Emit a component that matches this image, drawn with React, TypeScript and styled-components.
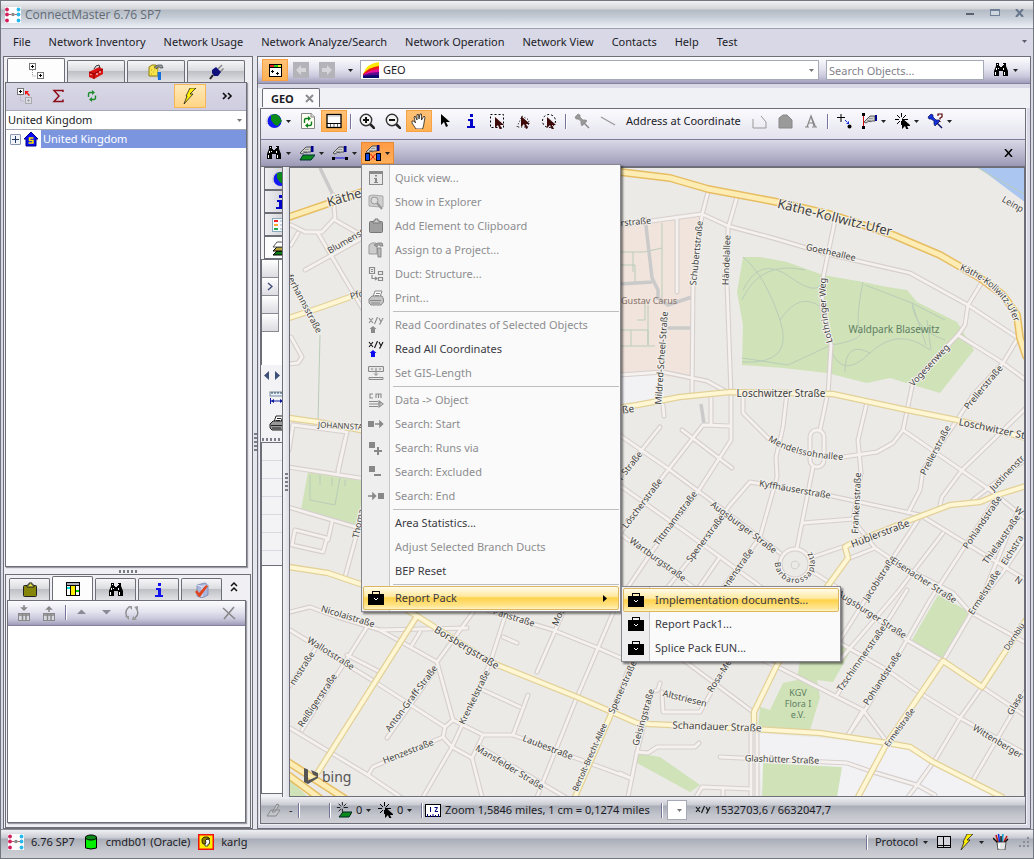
import React from "react";
import styled, { createGlobalStyle, css } from "styled-components";

const GlobalStyle = createGlobalStyle`
  * { box-sizing: border-box; }
  body {
    margin: 0;
    background: #d8d8e6;
    color: #1c1c26;
    font: 11px/16px "Noto Sans", "Open Sans", sans-serif;
  }
  button, input, select { font: inherit; color: inherit; margin: 0; }
  button { padding: 0; border: 0; background: none; white-space: nowrap; }
  svg { display: block; flex: none; }
`;

const line = "#6e6e78";
const barGradient = "linear-gradient(#fcfcfe 0%, #e4e3ef 45%, #c9c7db 75%, #9f9cba 100%)";
const chromeGradient = "linear-gradient(#eff0f3 0, #c9cbd2 8px, #a9adb7 9px, #c4c6cd 70%, #cfd0d6 100%)";

/* ---------- icons ---------- */

const Tree = ({ c = "#000" }: { c?: string }) => (
  <>
    <path d="M4.500 7v6h4" fill="none" stroke="#999" strokeDasharray="1 1" />
    <rect x="1.500" y="0.500" width="6" height="6" fill="#fff" stroke="#777" />
    <path d="M3 3.500h3M4.500 2v3" stroke={c} />
    <rect x="9.500" y="9.500" width="6" height="6" fill="#fff" stroke="#777" />
    <path d="M11 12.500h3M12.500 11v3" stroke={c} />
  </>
);

const Bino = () => (
  <>
    <path d="M3 1h3v3h1v1h2V4h1V1h3v3l2 5v5h-5V9H6v5H1V9l2-5z" fill="#000" />
    <path d="M4.500 2v1M10.500 2v1M3.500 6v2M5.500 6v1M10.500 6v2M2.500 10v3M11.500 10v3" stroke="#fff" />
  </>
);

const Hand = ({ x = 0, y = 0 }: { x?: number; y?: number }) => (
  <g transform={`translate(${x} ${y})`}>
    <path d="M0 8l4-4 2-2h5v5l-3 0-2 1-1-1-3 2z" fill="#cfcfcf" stroke="#333" strokeWidth="0.800" />
    <path d="M3 6.500h4M5 4.500h4" stroke="#777" strokeWidth="0.600" />
    <rect x="11" y="1" width="2.500" height="6" fill="#00008c" />
  </g>
);

const Cursor = ({ x = 0, y = 0, c = "#000" }: { x?: number; y?: number; c?: string }) => (
  <path transform={`translate(${x} ${y})`} d="M0 0v11l3-3 2 5 2-1-2-4h4z" fill={c} />
);

const Case = () => (
  <g shapeRendering="crispEdges">
    <path d="M4 5V1h8v4h-1V2H5v3z" fill="#000" />
    <rect x="0" y="4" width="16" height="11" fill="#000" />
    <path d="M6 8h1v1h2V8h1v1H9v1H7V9H6z" fill="#fff" />
  </g>
);

const Brand = () => (
  <>
    <rect width="16" height="16" fill="#fff" />
    {[2, 7, 13].map((y) => (
      <g key={y}>
        <circle cx="2" cy={y + 0.5} r="1.900" fill="#d21f5b" />
        <circle cx="13.500" cy={y + 0.5} r="1.900" fill="#27b9ee" />
      </g>
    ))}
    <circle cx="8" cy="7.500" r="1.800" fill="#888" />
    <path d="M4 7.500h2M10 7.500h2" stroke="#a66" />
  </>
);

const Refresh = ({ c = "#0b7f1e", d = "#0b7f1e" }: { c?: string; d?: string }) => (
  <>
    <path d="M4.500 9V6.500Q4.500 4.500 6 4.500h3" fill="none" stroke={c} strokeWidth="1.400" />
    <path d="M8 2v5l3-2.500z" fill={c} />
    <path d="M11.500 7.500v2Q11.500 11.500 10 11.500H7" fill="none" stroke={d} strokeWidth="1.400" />
    <path d="M8 9v5l-3-2.500z" fill={d} />
  </>
);

const Bolt = () => <path d="M8 0h6L8 6h3L2 16l3-8H4z" fill="#ffee00" stroke="#222" strokeWidth="0.800" />;
const InfoI = ({ c = "#0000c8" }: { c?: string }) => (
  <path d="M7 1h3v3H7zM5 6h5v7h2v2H4v-2h3V8H5z" fill={c} />
);
const Globe = () => (
  <>
    <circle cx="8.500" cy="8" r="7" fill="#1218f0" />
    <path d="M5 2l5-1 3 2 3 5-3 3-1 2-3-1-2-2-2-3z" fill="#0a8a18" />
    <path d="M1 11Q0 3 6 1" fill="none" stroke="#aaa" strokeDasharray="1 1" />
  </>
);
const Lens = ({ minus }: { minus?: boolean }) => (
  <>
    <path d="M11 11l5 5" stroke="#222" strokeWidth="2.500" />
    <circle cx="7" cy="7" r="5.700" fill="#f4f4f4" stroke="#333" strokeWidth="1.400" />
    <path d={minus ? "M4 7h6" : "M4 7h6M7 4v6"} stroke="#111" strokeWidth="2" />
  </>
);
const Pin = ({ c, e }: { c: string; e: string }) => (
  <>
    <path d="M1 4l3-3 2 1 0 2 3 3h3l1 1-5 5-1-2V8L4 6 2 6z" fill={c} stroke={e} strokeWidth="0.700" />
    <path d="M10 10l5 5" stroke={e} strokeWidth="1.400" />
  </>
);
const Star = () => (
  <path d="M7.500 0v4M7.500 8v4M1 6.500h4M9 6.500h5M3 2l3 3M12 2L9 5M3 11l3-3" stroke="#000" fill="none" />
);
const XY = ({ c = "#111", a }: { c?: string; a?: string }) => (
  <>
    <path d="M1 1l4 5M5 1L1 6M9.500 0L6.500 7M11 1l2 4M15 1l-3 6h-1" fill="none" stroke={c} strokeWidth="1.100" />
    {a && <path d="M5 8l3.500 3H7v4H3v-4H1.500z" transform="translate(0 1)" fill={a} />}
  </>
);
const Printer = ({ c = "#8a8a8a", f = "#ddd" }: { c?: string; f?: string }) => (
  <>
    <path d="M5 7l2-6h7l-2 6z" fill="#fff" stroke={c} />
    <path d="M1 9l3-3h10l1.500 3v3L13 15H3l-2-2z" fill={f} stroke={c} />
    <path d="M2 10.500h11M3 13h9M8 3.500h4M7 5.500h4" stroke={c} />
  </>
);
const TableArrow = ({ up }: { up?: boolean }) => (
  <>
    <rect x="2.500" y="8.500" width="11" height="7" fill="#d8d8e2" stroke="#888" />
    <path d="M2 10h12M6.500 9v6M10 9v6" stroke="#888" strokeWidth="1.500" />
    <path d={up ? "M8 7V2M6 4l2-2 2 2z" : "M8 0v5M6 3l2 2 2-2z"} stroke="#888" fill="#888" strokeWidth="1.500" />
  </>
);

const icons: Record<string, React.ReactNode> = {
  brand: <Brand />,
  tree: <Tree />,
  treeNew: (
    <>
      <path d="M4.500 7v6h4" fill="none" stroke="#aaa" strokeDasharray="1 1" />
      <rect x="1.500" y="0.500" width="6" height="6" fill="#fff" stroke="#777" />
      <path d="M3 3.500h3M4.500 2v3" stroke="#000" />
      <rect x="9.500" y="9.500" width="6" height="6" fill="#dcdce8" stroke="#aaa" />
      <path d="M11 12.500h3M12.500 11v3" stroke="#aaa" />
      <path d="M13.500 7.500l-3-3" stroke="#f01010" strokeWidth="1.500" /><path d="M9 3h4l-4 4z" fill="#f01010" />
    </>
  ),
  toolbox: (
    <>
      <path d="M1 8l10-5 4 2v5l-9 5-5-2z" fill="#d81414" />
      <path d="M1 8l5 2 9-5M6 10v5" stroke="#8a0000" fill="none" />
      <path d="M6 5l2-3 3-1 1 3" fill="none" stroke="#333" />
      <path d="M3 10v1M9 9v2M12 7v2" stroke="#fff" />
    </>
  ),
  project: (
    <>
      <path d="M1 3l3-2h4l2 2v9H1z" fill="#f6e34e" stroke="#8f7e10" />
      <path d="M3 6h1M5 8h1M3 10h1M6 5h1" stroke="#c9a400" />
      <path d="M6 3l4-2h4l1 3h-3v-1H9v2z" fill="#9aa4ac" stroke="#333" strokeWidth="0.600" />
      <path d="M10 5h2.500v3H10z" fill="#ccc" /><path d="M9.500 8h3.500v8H10z" fill="#1470e0" />
    </>
  ),
  plug: (
    <>
      <path d="M10 5l4-4M12 8l3.500-3.500" stroke="#888" strokeWidth="1.500" />
      <path d="M4 6l4-3 5 5-3 4-4 0-2-3z" fill="#10107c" />
      <path d="M5 11l-3 4" stroke="#222" strokeWidth="2" />
    </>
  ),
  sigma: <path d="M13 4V2.500H4l5 5.500-5 5.500h9v-2" fill="none" stroke="#8c0d18" strokeWidth="1.500" />,
  refresh: <Refresh c="#1c8c2c" d="#1c8c2c" />,
  bolt: <Bolt />,
  more: <path d="M3 5l3 3-3 3M8 5l3 3-3 3" fill="none" stroke="#111" strokeWidth="1.700" />,
  collapse: <path d="M5 7l3-3 3 3M5 12l3-3 3 3" fill="none" stroke="#111" strokeWidth="1.500" />,
  home: (
    <>
      <path d="M8 1l7 7h-2v7H3V8H1z" fill="#0a0af0" stroke="#00008a" />
      <path d="M10.500 7H6.500v2.500h3.500V12H5.500" fill="none" stroke="#ffe800" strokeWidth="1.500" />
    </>
  ),
  clipboard: (
    <>
      <rect x="1.500" y="3.500" width="13" height="11" rx="1" fill="#85850a" stroke="#222" />
      <path d="M5 5V3h2V1h3v2h2v2z" fill="#e8e44a" stroke="#222" />
    </>
  ),
  table: (
    <>
      <rect x="1.500" y="1.500" width="13" height="13" fill="#fff" stroke="#000" />
      <rect x="2" y="2" width="12" height="2" fill="#aab" /><path d="M1 4.500h14M5.500 4v11M10.500 4v11" stroke="#000" />
      <rect x="6" y="5" width="4" height="9" fill="#ffee00" /><path d="M2 7h3" stroke="#0dd" strokeWidth="2" />
      <path d="M11 10h3" stroke="#0c0" strokeWidth="2" />
    </>
  ),
  bino: <Bino />,
  info: <InfoI c="#1212f0" />,
  infoDark: <InfoI />,
  check: (
    <>
      <path d="M3 3l8-2 3 2v10l-6 3-5-2z" fill="#a9b6dc" stroke="#6f7ba8" strokeWidth="0.700" />
      <path d="M3 3l5 1.500L14 3M8 4v11" stroke="#e4e9f8" fill="none" />
      <path d="M1 10l2-2 2 3 7-8 2 1-8 11H5z" fill="#e04520" />
    </>
  ),
  tabDown: <TableArrow />,
  tabUp: <TableArrow up />,
  up: <path d="M3 9h9L7.500 4.500z" fill="#8a8a96" />,
  down: <path d="M3 5h9l-4.500 4.500z" fill="#8a8a96" />,
  cycle: (
    <>
      <path d="M3 12Q0 6 5 2M12 3Q16 9 11 13" fill="none" stroke="#888" strokeWidth="1.300" />
      <path d="M4 1h4v4zM8 15h5l-4-4zM10 2l4-1v4zM1 11h4v4z" fill="#999" />
    </>
  ),
  del: <path d="M2 3l12 11M13 2L3 14" stroke="#888" strokeWidth="1.600" />,
  window: (
    <>
      <rect x="2.500" y="2.500" width="12" height="12" fill="#fff" stroke="#000" />
      <path d="M3 4h4" stroke="#e02020" strokeWidth="2" /><path d="M7 4h4" stroke="#2c2" strokeWidth="2" /><path d="M11 4h3" stroke="#ee2" strokeWidth="2" />
      <path d="M3 5.500h11M4 9.500h3M5.500 8v3M9 11.500h3M10.500 10v3" stroke="#000" />
    </>
  ),
  back: (
    <>
      <rect width="16" height="16" fill="#b3b3b9" /><path d="M3 8l5-5v3h5v4H8v3z" fill="#d6d6da" />
    </>
  ),
  fwd: (
    <>
      <rect width="16" height="16" fill="#b3b3b9" /><path d="M13 8L8 3v3H3v4h5v3z" fill="#d6d6da" />
    </>
  ),
  geo: (
    <>
      <path d="M0 12Q4 1 16 0v16H0z" fill="#ffe800" />
      <path d="M0 12Q6 5 16 4v12H0z" fill="#f01818" />
      <path d="M0 13Q6 8 16 7v9H0z" fill="#e4119c" />
      <path d="M0 13Q8 10 16 10v6H0z" fill="#5a0a8c" />
      <path d="M0 14Q8 13 16 13v3H0z" fill="#0a0a6e" />
    </>
  ),
  globe: <Globe />,
  page: (
    <>
      <path d="M1.500 0.500h10l3 3v12h-13z" fill="#fffff2" stroke="#888" />
      <path d="M11 0v4h4" fill="#ddd" stroke="#888" />
      <g transform="translate(0 1)"><Refresh /></g>
    </>
  ),
  layout: (
    <>
      <rect x="1" y="1.500" width="14" height="13" fill="#fff" stroke="#000" strokeWidth="1.300" />
      <path d="M1 10.500h14" stroke="#000" /><path d="M2 3h12" stroke="#bbb" /><path d="M4.500 11v3M8 11v3M11.500 11v3" stroke="#666" />
    </>
  ),
  zoomIn: <Lens />,
  zoomOut: <Lens minus />,
  hand: (
    <path d="M5 16l-4-6V8h2l1.500 2L3 4l1-1 2 4V1.500h1.500L8 6l1-5h1.500V7L13 3l1 1-1.500 9-1 3z" fill="#fff" stroke="#222" strokeWidth="0.800" />
  ),
  cursor: <Cursor x={4} y={1} />,
  selRect: (
    <><rect x="1.500" y="1.500" width="13" height="13" fill="none" stroke="#000" strokeDasharray="2 2" /><Cursor x={6} y={4} c="#3c0808" /></>
  ),
  selPoly: (
    <><path d="M2 14L7 3l7 4-1 7z" fill="none" stroke="#000" strokeDasharray="1 2" /><Cursor x={6} y={3} c="#3c0808" /></>
  ),
  selCircle: (
    <><circle cx="8" cy="8" r="6.500" fill="none" stroke="#000" strokeDasharray="2 2" /><Cursor x={6} y={4} c="#3c0808" /></>
  ),
  pinGrey: <Pin c="#999" e="#888" />,
  lineGrey: <path d="M1 4l14 8" stroke="#999" strokeWidth="1.300" />,
  shape: <path d="M2 6v9h13V9l-5-6" fill="none" stroke="#999" />,
  shapeFill: <path d="M2 15V5l4-3h4l5 5v8z" fill="#9a9a9a" stroke="#888" />,
  letter: <path d="M2 14h4M9 14h5M4 14L8 3l4.500 11M5 10h5M8 3l3 10" fill="none" stroke="#888" strokeWidth="1.200" />,
  addPoint: (
    <>
      <path d="M1 4.500h8M5 1v8" stroke="#000" /><path d="M9 7l2 2" stroke="#0a2ae0" /><path d="M10 11h3V8z" fill="#0a2ae0" />
      <circle cx="13.500" cy="13.500" r="2" />
    </>
  ),
  digitize: (
    <><path d="M2.500 2v12" stroke="#d01010" /><rect x="1" y="0" width="3" height="3" /><rect x="1" y="13" width="3" height="3" /><Hand x={3} y={1} /></>
  ),
  snap: <><Star /><Cursor x={8} y={5} /></>,
  pinBlue: (
    <><Pin c="#1430d8" e="#081060" /><path d="M11 3V1h4v3l-2 1v1.500M13 8v1" fill="none" stroke="#500" strokeWidth="1.200" /></>
  ),
  handLayer: <><path d="M1 15l3-5h12l-4 5z" fill="#0a8a18" stroke="#033" /><Hand x={1} y={0} /></>,
  handLine: <><Hand x={1} y={0} /><path d="M2 13h12" stroke="#1212e0" /><rect x="0" y="12" width="3" height="3" /><rect x="13" y="12" width="3" height="3" /></>,
  handObj: (
    <>
      <Hand x={1} y={-1} />
      <rect x="0.500" y="8.500" width="4" height="7" fill="#1248e0" stroke="#000" /><rect x="11.500" y="8.500" width="4" height="7" fill="#1248e0" stroke="#000" />
      <path d="M5.500 9l5 6M10.500 9l-5 6" stroke="#e02010" />
    </>
  ),
  list: (
    <>
      <rect x="0.500" y="1.500" width="16" height="13" fill="#f4faff" stroke="#8ab" />
      <path d="M2 4h4" stroke="#e22" strokeWidth="2" /><path d="M2 8h4" stroke="#fa3" strokeWidth="2" /><path d="M2 12h4" stroke="#2a4" strokeWidth="2" />
      <path d="M8 4h6M8 8h6M8 12h6" stroke="#9ab" />
    </>
  ),
  layers: (
    <>
      <path d="M1 15l4-4h11v4z" fill="#0a7a14" stroke="#000" /><path d="M1 11l4-4h11v4z" fill="#b8a63a" stroke="#000" />
      <path d="M1 7l4-5h11v5z" fill="#fff" stroke="#555" />
    </>
  ),
  measure: (
    <>
      <rect x="1" y="2" width="15" height="4" fill="#e9f2ff" stroke="#789" /><path d="M3 2v2M6 2v2M9 2v2M12 2v2" stroke="#345" />
      <path d="M1.500 8v6M14.500 8v6M2 11h12" stroke="#0c1ca0" /><path d="M2 11l3-2v4zM14 11l-3-2v4z" fill="#0c1ca0" />
    </>
  ),
  printer: <Printer c="#222" f="#999" />,
  pencil: <path d="M1 14l4-6h9l-4 6zM6 10l5-8 2 1-4 7z" fill="#c4c6cd" stroke="#888" />,
  starLayer: <><path d="M3 15l4-5h9l-3 5z" fill="#0a8a18" stroke="#022" /><g transform="scale(.85)"><Star /></g></>,
  ruler: (
    <>
      <rect x="0.500" y="2.500" width="15" height="12" fill="#fff" stroke="#000" />
      <path d="M2.500 15v-3M5.500 15v-2M8 15v-3M10.500 15v-2M13.500 15v-3M5.500 5v5M9.500 5.500h3L10 9.500h3" stroke="#000080" fill="none" />
    </>
  ),
  xy: <g transform="translate(0 4)"><XY /></g>,
  db: (
    <><path d="M2.500 3v11q5.500 2 11 0V3z" fill="#00f000" stroke="#000" /><ellipse cx="8" cy="3.500" rx="5.500" ry="2.500" fill="#0a8a18" stroke="#000" /></>
  ),
  user: (
    <>
      <rect x="0.750" y="0.750" width="14.500" height="14.500" fill="#ffee00" stroke="#f01010" strokeWidth="1.500" />
      <path d="M7 12h3v-2h1.500V6L9 5 7 7z" fill="#fff" stroke="#222" strokeWidth="0.800" />
      <path d="M4 8V5l2-2h4l2 2H9L7.500 6.500 8 9l-1 1H5z" fill="#8a7a00" stroke="#000" strokeWidth="0.700" />
    </>
  ),
  book: <><rect x="1.500" y="2.500" width="13" height="11" fill="#d4d5dc" stroke="#000" /><path d="M7.500 2v11M2 11.500h12" stroke="#000" /></>,
  pens: (
    <>
      <path d="M5 8L3 1M11 8l3-6" stroke="#c01010" strokeWidth="1.500" /><path d="M6.500 8L5.500 0" stroke="#0a2ae0" strokeWidth="1.500" />
      <path d="M9 8l1-8" stroke="#0a9ad0" strokeWidth="1.500" /><path d="M0 4l5 5M15 5l-4 4M8 8V2" stroke="#000" strokeWidth="1.300" />
      <path d="M4 8h9l-1 8H5z" fill="#e6e6e6" stroke="#333" strokeWidth="0.800" /><path d="M6 10v4" stroke="#fff" strokeWidth="2" />
    </>
  ),
  mQuick: (
    <><rect x="1.500" y="1.500" width="13" height="13" fill="#e8e8e8" stroke="#8a8a8a" /><path d="M1 3h14" stroke="#8a8a8a" strokeWidth="2" /><path d="M7 5h2v1.500H7zM6 8h3v4h1v1H6v-1h1V9H6z" fill="#888" /></>
  ),
  mExplorer: (
    <><path d="M1 2l4-1 10 1v11l-3 0L1 12z" fill="#cfcfcf" stroke="#aaa" /><circle cx="6.500" cy="6.500" r="3.500" fill="#ddd" stroke="#999" /><path d="M9 9l5 6" stroke="#999" strokeWidth="2" /></>
  ),
  mClip: <><rect x="1.500" y="3.500" width="13" height="11" rx="1" fill="#a0a0a0" stroke="#777" /><path d="M5 5V3h2V1h3v2h2v2z" fill="#ccc" stroke="#777" /></>,
  mProject: (
    <><path d="M1 3l3-2h4l1 2v9H1z" fill="#ccc" stroke="#999" /><path d="M6 3l4-2h4l1 3h-3V3H9v2z" fill="#aaa" stroke="#888" /><path d="M9.500 6h3.500v9H10z" fill="#bbb" stroke="#888" /></>
  ),
  mDuct: (
    <path d="M1.500 1.500h5v6h-5zM3 3.500h2M3 5.500h2M10.500 5.500h4v3h-4zM10.500 11.500h4v3h-4zM4 9v3.500h4M7 11l2 1.500L7 14" fill="none" stroke="#8a8a8a" strokeWidth="1.200" />
  ),
  mPrint: <Printer f="#c4c4c4" />,
  mXYGrey: <XY c="#8a8a8a" a="#8a8a8a" />,
  mXY: <XY a="#0a0af0" />,
  mGis: (
    <path d="M0.500 1.500h15v5h-15zM4 3v2M8 3v3M12 3v2M8 7v3M6 8.500l2 2 2-2M1 12.500h14v2H1z" fill="#e4e4e4" stroke="#8a8a8a" />
  ),
  mData: <path d="M5 2H2v4h3M8 6V2h5v4M10.500 2v4M1 9.500h9M1 12h12M1 14.500h9M11 9l4 3-4 3z" fill="none" stroke="#8a8a8a" strokeWidth="1.100" />,
  mStart: <><rect x="0" y="5" width="6" height="6" fill="#888" /><path d="M7 8h6M12 5.500l2.500 2.500-2.500 2.500z" stroke="#888" fill="#888" strokeWidth="1.500" /></>,
  mVia: <><rect x="1" y="2" width="6" height="6" fill="#888" /><path d="M6 11h8M10 7v8" stroke="#888" strokeWidth="2" /></>,
  mExcl: <><rect x="1" y="2" width="6" height="6" fill="#888" /><path d="M6 11h7" stroke="#888" strokeWidth="2" /></>,
  mEnd: <><rect x="10" y="5" width="6" height="6" fill="#888" /><path d="M0 8h6M5 5.500l2.500 2.500-2.500 2.500z" stroke="#888" fill="#888" strokeWidth="1.500" /></>,
  case: <Case />,
};

const Icon = ({ n }: { n: string }) => (
  <svg width="16" height="16" viewBox="0 0 16 16" aria-hidden="true">{icons[n]}</svg>
);
const Caret = ({ c = "#222" }: { c?: string }) => (
  <svg width="5" height="3" viewBox="0 0 5 3" aria-hidden="true"><path d="M0 0h5L2.500 3z" fill={c} /></svg>
);

/* ---------- window chrome ---------- */

const Window = styled.div`
  display: flex;
  flex-direction: column;
  height: 100vh;
  min-width: 900px;
  min-height: 700px;
  overflow: hidden;
  border: 1px solid #72767f;
  background: #d8d8e6;
`;
const TitleBar = styled.header`
  display: flex;
  align-items: center;
  flex: none;
  height: 28px;
  padding: 0 3px 0 4px;
  gap: 4px;
  border-bottom: 1px solid #9aa1ad;
  background: linear-gradient(#f1f2f5 0, #d3d4d8 8px, #b3bac4 9px, #c6ccd5 60%, #edf0f7 100%);
`;
const Title = styled.h1`
  flex: 1;
  margin: 0;
  font-size: 12px;
  font-family: "Open Sans", sans-serif;
  font-weight: 400;
  color: #636a74;
`;
const CaptionButton = styled.button`
  display: flex;
  align-items: flex-start;
  justify-content: center;
  width: 21px;
  height: 11px;
`;
const MenuBar = styled.nav`
  display: flex;
  align-items: center;
  flex: none;
  height: 27px;
  padding: 0 6px 2px 12px;
  gap: 18px;
`;
const MenuTail = styled.span`
  margin-left: auto;
`;
const Body = styled.div`
  display: grid;
  grid-template-columns: 250px 4px minmax(0, 1fr);
  flex: 1;
  min-height: 0;
  padding: 0 2px;
`;
const LeftColumn = styled.aside`
  display: flex;
  flex-direction: column;
  min-height: 0;
  padding: 0 1px;
  border: 1px solid ${line};
  background: #f0f0f4;
`;
const Group = styled.section<{ $grow?: boolean }>`
  display: flex;
  flex-direction: column;
  flex: ${(p) => (p.$grow ? "1 1 auto" : "0 0 254px")};
  min-height: 0;
  ${(p) => (p.$grow
    ? css`padding: 1px 4px 0 0;`
    : css`padding: 1px 4px 4px 1px; border: 1px solid ${line};`)}
`;
const Tabs = styled.div`
  display: flex;
  align-items: flex-end;
  flex: none;
  gap: 2px;
  height: 24px;
  padding: 0 2px;
`;
const Tab = styled.button<{ $on?: boolean }>`
  display: flex;
  align-items: center;
  justify-content: center;
  flex: 1;
  height: ${(p) => (p.$on ? 24 : 22)}px;
  border: 1px solid ${line};
  border-bottom: 0;
  border-radius: 2px 2px 0 0;
  background: ${(p) => (p.$on ? "#fdfdfe" : "linear-gradient(#f6f6f8 0, #dcdde0 45%, #bfc0c5 50%, #e2e2e6 100%)")};
`;
const PlainButton = styled.button`
  display: flex;
  align-items: center;
  justify-content: center;
  width: 20px;
  height: 26px;
`;
const Box = styled.div`
  display: flex;
  flex-direction: column;
  flex: 1;
  min-height: 0;
  border: 1px solid ${line};
  background: #fff;
  box-shadow: 1px 1px 1px #9b9ba4;
`;
const SideBar = styled.div<{ $deep?: boolean }>`
  display: flex;
  align-items: center;
  flex: none;
  height: ${(p) => (p.$deep ? 25 : 27)}px;
  padding: ${(p) => (p.$deep ? "0 4px 1px" : "0 6px 1px")};
  gap: ${(p) => (p.$deep ? 1 : 10)}px;
  background: ${(p) => (p.$deep ? barGradient : "linear-gradient(#d9d8e6, #cfcddf)")};
  border-bottom: ${(p) => (p.$deep ? "1px solid #84819e" : "0")};
`;
const SideButton = styled.button<{ $hot?: boolean }>`
  display: flex;
  align-items: center;
  justify-content: center;
  width: ${(p) => (p.$hot ? 32 : 24)}px;
  height: 24px;
  ${(p) => p.$hot && css`border: 1px solid #f7b55a; background: linear-gradient(#ffe9b8, #ffd585);`}
`;
const Push = styled.span`
  flex: 1;
`;
const Spacer = styled.span<{ $w: number }>`
  flex: none;
  width: ${(p) => p.$w}px;
`;
const SelectBox = styled.label<{ $grow?: boolean; $side?: boolean }>`
  display: flex;
  align-items: center;
  gap: 4px;
  flex: ${(p) => (p.$grow ? "1" : "none")};
  height: 20px;
  padding: 0 4px 0 2px;
  border: 1px solid #a4a9b5;
  background: #fff;
  ${(p) => p.$side && css`border-width: 1px 0;`}
  select {
    flex: 1;
    min-width: 0;
    height: 18px;
    padding: 0;
    border: 0;
    outline: 0;
    appearance: none;
    background: transparent;
  }
`;
const TreeRow = styled.div`
  display: flex;
  align-items: center;
  gap: 2px;
  height: 18px;
  padding-left: 4px;
`;
const Expander = styled.button`
  display: flex;
  align-items: center;
  justify-content: center;
  width: 11px;
  height: 11px;
  border: 1px solid #8a97b0;
  border-radius: 1px;
  background: #f2f4f8;
`;
const TreeLabel = styled.span`
  flex: 1;
  height: 18px;
  padding-left: 2px;
  line-height: 18px;
  color: #fff;
  background: #7b96df;
`;
const Grip = styled.div<{ $v?: boolean }>`
  flex: none;
  align-self: center;
  width: ${(p) => (p.$v ? 3 : 19)}px;
  height: ${(p) => (p.$v ? 19 : 3)}px;
  margin: ${(p) => (p.$v ? "0" : "3px 0 1px")};
  background: repeating-linear-gradient(${(p) => (p.$v ? "180deg" : "90deg")}, #7c7c88 0 2px, transparent 2px 4px);
`;

/* ---------- right side ---------- */

const Main = styled.main`
  display: flex;
  flex-direction: column;
  min-width: 0;
  min-height: 0;
  border: 1px solid ${line};
  background: #d8d8e6;
`;
const AddressBar = styled.div`
  display: flex;
  align-items: center;
  flex: none;
  height: 27px;
  padding: 0 4px;
  border-bottom: 1px solid #84819e;
  background: ${barGradient};
`;
const SearchInput = styled.input`
  width: 158px;
  height: 20px;
  margin: 0 5px 0 7px;
  padding: 0 2px;
  border: 1px solid #a4a9b5;
  border-radius: 0;
  outline: 0;
  background: #fff;
  &::placeholder { color: #82828a; opacity: 1; }
`;
const DocTabs = styled.div`
  display: flex;
  align-items: flex-end;
  flex: none;
  height: 20px;
  margin-top: 4px;
  padding-left: 4px;
  background: #f0f1f4;
`;
const DocTab = styled.div`
  display: flex;
  align-items: center;
  gap: 11px;
  width: 58px;
  height: 20px;
  padding-left: 8px;
  border: 1px solid ${line};
  border-bottom: 0;
  border-radius: 2px 2px 0 0;
  background: #fbfbfd;
  font-weight: 700;
`;
const Doc = styled.div`
  display: flex;
  flex-direction: column;
  flex: 1;
  min-height: 0;
  margin: 0 4px 4px 2px;
  border: 1px solid ${line};
  box-shadow: 0 0 0 1px #f0f0f4;
`;
const ToolRow = styled.div<{ $deep?: boolean }>`
  display: flex;
  align-items: center;
  flex: none;
  height: ${(p) => (p.$deep ? 27 : 31)}px;
  padding: ${(p) => (p.$deep ? "0 12px 0 1px" : "0 8px 6px 1px")};
  background: ${(p) => (p.$deep ? "linear-gradient(#d9d8e6, #b9b7ce 55%, #9b98b6)" : "linear-gradient(#fbfbfe, #e3e2ee)")};
  border-bottom: 1px solid ${(p) => (p.$deep ? line : "#7d7a9a")};
`;
const Tool = styled.button<{ $menu?: boolean; $hot?: boolean; $open?: boolean; $text?: boolean; $slim?: boolean }>`
  display: flex;
  align-items: center;
  justify-content: center;
  gap: ${(p) => (p.$menu ? 4 : 0)}px;
  flex: none;
  width: ${(p) => (p.$text ? "auto" : p.$menu ? "33px" : p.$slim ? "20px" : "26px")};
  padding: ${(p) => (p.$text ? "0 5px" : "0")};
  height: 22px;
  ${(p) => p.$hot && css`background: linear-gradient(#ffc37a, #ffb050); box-shadow: inset 0 0 0 1px #f9a245;`}
  ${(p) => p.$open && css`background: linear-gradient(#ff9a45, #ffb05c); box-shadow: inset 0 0 0 1px #e88a30;`}
`;
const Sep = styled.span`
  flex: none;
  width: 1px;
  height: 15px;
  margin: 0 3px;
  background: #77749a;
  box-shadow: 1px 0 0 #fff;
`;
const Anchor = styled.div`
  position: relative;
  flex: none;
`;
const Work = styled.div`
  display: grid;
  grid-template-columns: 22px 6px minmax(0, 1fr);
  flex: 1;
  min-height: 0;
  background: linear-gradient(90deg, #f3f3f6 22px, #dcdde4 28px, #f3f3f6 28px);
`;
const Rail = styled.div`
  display: flex;
  flex-direction: column;
  min-height: 0;
  overflow: hidden;
  border-right: 1px solid ${line};
`;
const RailTab = styled.button<{ $on?: boolean }>`
  display: flex;
  align-items: center;
  flex: none;
  width: 30px;
  height: 23px;
  margin-left: 3px;
  padding-left: 7px;
  border: 1px solid ${line};
  border-width: 1px 0 1px 1px;
  background: ${(p) => (p.$on ? "#fdfdfe" : "linear-gradient(90deg, #efeff2, #c4c5ca)")};
`;
const RailCells = styled.div`
  flex: none;
  height: 106px;
  border-top: 1px solid ${line};
  border-left: 1px solid ${line};
  background: #fff;
`;
const RailCell = styled.button`
  display: flex;
  align-items: center;
  justify-content: center;
  width: 17px;
  height: 18px;
  border: 1px solid #8a8a92;
  border-width: 0 1px 1px 0;
  background: linear-gradient(#fff, #dcdce2);
`;
const RailRow = styled.div<{ $h: number; $icon?: boolean }>`
  display: flex;
  align-items: center;
  justify-content: ${(p) => (p.$icon ? "flex-start" : "center")};
  gap: 6px;
  flex: none;
  height: ${(p) => p.$h}px;
  padding-left: ${(p) => (p.$icon ? 8 : 0)}px;
`;
const RailGrid = styled.div`
  flex: none;
  height: 124px;
  border: 1px solid ${line};
  border-width: 1px 0 1px 1px;
  background: repeating-linear-gradient(#f3f3f6 0 17px, #d9d9e2 17px 18px);
`;
const RailRest = styled.div`
  flex: 1;
  margin-bottom: 3px;
  border: 1px solid ${line};
  border-width: 0 0 1px 1px;
  background: #fff;
`;
const RailGap = styled.div`
  display: flex;
  align-items: center;
  justify-content: center;
`;
const Splitter = styled.div`
  display: flex;
  align-items: center;
  justify-content: center;
  background: #e6e6ee;
`;
const MapFrame = styled.div`
  position: relative;
  min-width: 0;
  min-height: 0;
  overflow: hidden;
  border: 1px solid ${line};
  background: #ebeae6;
`;
const MapSvg = styled.svg`
  position: absolute;
  inset: 0;
  width: 100%;
  height: 100%;
  font-family: "Noto Sans", "Open Sans", sans-serif;
`;
const StatusRow = styled.footer<{ $outer?: boolean }>`
  display: flex;
  align-items: center;
  flex: none;
  height: ${(p) => (p.$outer ? 29 : 26)}px;
  padding: ${(p) => (p.$outer ? "0 3px 4px 7px" : "0 8px 0 5px")};
  background: ${chromeGradient};
  ${(p) => p.$outer && css`border-top: 1px solid #8b8b95;`}
`;
const StatusItem = styled.span<{ $w?: number; $tight?: boolean }>`
  display: flex;
  align-items: center;
  gap: ${(p) => (p.$tight ? 4 : 7)}px;
  flex: none;
  padding-right: ${(p) => (p.$tight ? 0 : 8)}px;
  width: ${(p) => (p.$w ? p.$w + "px" : "auto")};
`;

/* ---------- menus ---------- */

const Menu = styled.div<{ $sub?: boolean }>`
  position: absolute;
  z-index: 5;
  top: ${(p) => (p.$sub ? 0 : 22)}px;
  left: ${(p) => (p.$sub ? "calc(100% + 2px)" : "0")};
  width: ${(p) => (p.$sub ? 220 : 260)}px;
  padding: 1px;
  border: 1px solid #86868c;
  background: linear-gradient(90deg, #eeeeef 0 27px, #c6c6ca 27px 28px, #fafafa 28px);
  box-shadow: 2px 2px 2px rgba(0, 0, 0, 0.5);
`;
const MenuRow = styled.button<{ $hot?: boolean }>`
  display: flex;
  align-items: center;
  gap: 11px;
  width: 100%;
  height: 24px;
  padding: 0 12px 0 5px;
  text-align: left;
  color: #3a3a44;
  &:disabled { color: #8d8d90; }
  ${(p) => p.$hot && css`
    border: 1px solid #dcb660;
    border-radius: 2px;
    padding: 0 11px 0 4px;
    background: linear-gradient(#fffbe9 0, #ffe9a0 42%, #ffd24a 50%, #ffe48c 85%, #fff3c2 100%);
  `}
`;
const MenuText = styled.span`
  flex: 1;
`;
const IconSlot = styled.span`
  width: 16px;
`;
const Rule = styled.hr`
  height: 1px;
  margin: 1px 0 1px 30px;
  border: 0;
  background: #bdbdc2;
`;
const SubAnchor = styled.div`
  position: relative;
`;

/* ---------- map ---------- */

const minor = [
  "708,192 702,215 693,282 692,395", "737,197 728,228 727,282 731,395",
  "600,228 702,214 728,226 773,238 827,254 910,273 968,305 1018,338",
  "835,220 823,278 822,308 831,345 828,395", "982,282 968,305 965,325 958,335 913,382 903,430 893,443 877,452 843,457",
  "958,335 1003,363 1026,380", "1018,338 1003,363 973,395 957,420 923,470 920,490 908,513", "918,520 867,597 840,640",
  "677,217 677,292", "620,375 663,372 692,378 707,381 727,392", "743,392 743,413 770,440 800,453 840,457",
  "787,392 783,427 776,457 777,477 760,537 720,592", "828,392 820,430", "813,467 797,548",
  "867,402 858,440 861,473 853,520 875,548", "803,523 853,519", "663,593 687,563 730,505 750,482 827,495 920,515 1026,580",
  "620,533 668,470 703,425 730,426", "731,397 731,440 697,493 653,550 622,596", "711,397 711,425", "682,430 732,468",
  "660,427 620,477", "615,432 670,470 713,502 780,553", "615,482 687,533 720,557 765,590", "615,530 693,587", "720,557 690,600",
  "810,570 838,588", "810,558 845,546", "850,558 875,548 900,565 953,593 970,612 1026,643", "903,430 990,490 1026,519",
  "1026,408 962,470 942,497 940,505", "1026,459 973,500", "997,497 967,543 930,600 907,640 867,707 848,735",
  "943,533 897,593 840,660", "1018,510 985,590 943,661", "1026,537 1003,572 970,613", "840,643 887,670 920,693 960,718 1026,754",
  "836,590 907,640 943,661", "982,687 1026,716", "982,687 960,718 935,760 915,788 908,797", "1026,690 973,780",
  "740,650 778,667 863,710 887,742", "863,710 848,735", "837,695 882,630 907,590", "670,650 753,712",
  "662,692 663,712 700,712 735,650", "660,683 658,690 652,692 637,752 628,797", "637,752 648,753 657,747 695,747 699,743",
  "751,732 751,797", "757,732 757,797", "720,757 847,763 873,772 917,785 935,795", "696,797 702,787 751,789", "723,788 723,797",
  "620,773 630,778", "663,405 664,416", "290,612 310,607 337,617 380,630 437,662 453,720", "380,630 467,628", "412,645 420,632",
  "290,630 372,680 445,727 453,720 483,735 513,735 630,778", "367,627 345,662 302,730", "347,655 380,672",
  "290,728 368,775 405,800", "368,775 373,767 443,737 445,727", "443,737 452,747 472,758 482,797", "452,747 423,797",
  "452,747 463,723 490,663 507,610", "483,735 472,758", "513,735 528,695", "483,690 520,707", "437,662 476,608",
  "537,672 565,608", "615,608 598,648 577,697 537,797", "480,608 553,630 598,648 630,662", "480,747 565,797", "632,660 612,712",
  "387,738 437,667", "283,695 318,645", "503,637 517,643", "291,225 305,232 322,232 335,218 333,195", "335,220 370,240",
  "318,233 365,313", "305,270 366,236", "298,233 291,245", "291,337 302,357 298,363 288,364", "293,425 347,432 338,470", "293,425 289,450",
  "288,467 366,479", "345,440 338,473", "288,507 332,520 366,530", "295,530 327,538 323,552 292,545 295,530", "332,522 328,540",
  "366,500 345,577",
];
const yellow = [
  "610,409 637,405 680,397 730,392 833,394 907,410 957,420 1026,438",
  "1026,486 997,495 980,502 950,505 913,519 850,544 845,547 848,558 827,587 777,665 754,712 754,728",
  "417,616 490,662 577,697 612,712 637,723 650,724 753,729 820,733 887,743 910,747 933,762 1002,797",
  "417,616 318,772", "612,712 575,797", "943,661 887,743 858,797", "943,661 982,687 1026,620",
  "289,567 328,573 366,586 417,616", "289,318 322,307 370,290", "289,418 318,422 366,431",
];
const primary = [
  "289,217 362,192 480,165 620,172 670,178 708,189 777,202 833,215 893,235 940,255 980,278 1003,295 1017,315 1020,338 1026,356",
  "288,762 347,800", "288,775 322,800",
];
const parks = [
  "743,257 760,257 787,262 823,275 863,282 887,287 907,290 917,302 957,322 974,350 940,393 913,385 890,378 867,383 827,373 783,368 742,365 743,325 737,292",
  "308,472 366,480 356,528 301,510", "938,595 970,612 943,660 912,640",
  "800,660 842,642 850,652 833,682 817,680 820,697 810,730 758,728 760,707 770,710 783,683 797,680",
  "637,753 660,757 700,785 690,792 637,763", "289,779 308,797 289,797", "763,763 842,767 837,797 762,797",
];
const paths = [
  "M743,290Q760,255 790,277T823,278M742,300Q760,260 805,270M743,257Q765,275 780,320T742,362M780,320Q800,290 822,308M742,358L788,365L831,345M863,282Q855,320 860,330T831,345M831,350Q842,380 870,353T930,350",
  "M870,353Q845,340 845,372M865,285L912,303Q915,330 945,340M912,303L926,345M912,303L945,320M927,320L931,350",
  "M978,168L1026,195M320,335L318,422M310,475v25l25,5 5,-28M320,475v10M332,478v8M345,480v6",
  "M620,252h24l18,-4M633,252v20M662,223v75M620,265h15v18M645,300v20h-8M620,330h28v15M631,330v16M620,346h35M648,305v40",
];
const greys = "M645,217L652,278L658,290V300M620,284L652,282M658,298L668,305L692,297M662,328H691M701,404L704,424M320,168L333,195";

type Label = [string, number, number, number, number?, ("start" | "end")?];
const labels: Label[] = [
  ["Käthe-Kollwitz-Ufer", 835, 217, 14, 13], ["Käthe-", 327, 202, -16, 13, "start"], ["Goetheallee", 831, 252, 13],
  ["Schubertstraße", 696, 253, -84], ["Händelallee", 726, 260, -88], ["Vogesenweg", 929, 365, -47], ["erstraße", 651, 220, -5, 9, "end"],
  ["Mildred-Scheel-Straße", 661, 358, -86], ["Leinp", 1003, 198, 30, 9, "start"], ["Loschwitzer Straße", 781, 393, 0, 10],
  ["Loschwitzer St", 959, 421, 12, 10, "start"], ["Kyffhäuserstraße", 795, 489, 10], ["Augsburger Straße", 744, 527, 37],
  ["Löscherstraße", 642, 503, -53], ["Tittmannstraße", 675, 518, -53], ["Spenerstraße", 705, 538, -53], ["r Straße", 640, 452, -52, 9, "end"],
  ["Wartburgstraße", 658, 559, 36], ["nnenstraße", 751, 549, -55, 9, "end"], ["Frankenstraße", 856, 503, -87], ["Hüblerstraße", 880, 533, -21, 10],
  ["Prellerstraße", 935, 450, -62], ["Prellerstraße", 983, 387, -50], ["Justinenstr", 991, 489, -46, 9, "start"], ["Pohlandstraße", 982, 522, -56],
  ["Thielaustraße", 1001, 539, -55], ["Eichstra", 1003, 564, -58, 9, "start"], ["Jacobistraße", 879, 578, -57], ["Eisenacher Straße", 924, 580, 33],
  ["Ermelstraße", 984, 592, -57], ["W", 1016, 508, 40, 9, "start"], ["N", 1016, 578, 35, 9, "start"], ["Augsburger Straße", 872, 614, 33],
  ["Tzschimmerstraße", 861, 658, -55], ["Pohlandstraße", 882, 678, -57], ["Rosa-Me", 709, 691, -57, 9, "start"], ["Altstriesen", 685, 698, 14],
  ["Geisingstraße", 643, 717, -74], ["Spenerstraße", 622, 687, -66], ["Schandauer Straße", 717, 726, 2, 10], ["Glashütter Straße", 782, 759, 2],
  ["Ermelstraße", 899, 727, -54, 8], ["Dornblü", 1005, 649, -56, 8, "start"], ["Glase", 1009, 714, -60, 9, "start"], ["Wittenberger", 998, 741, 31],
  ["Nicolaistraße", 348, 616, 17], ["Wallotstraße", 331, 653, 32], ["nnstraße", 312, 652, -57, 9, "end"], ["Reißigerstraße", 317, 700, -56],
  ["Anton-Graff-Straße", 411, 698, -53], ["Krenkelstraße", 474, 697, -64], ["Borsbergstraße", 467, 647, 31, 10], ["Panstraße", 514, 617, 17],
  ["Mos", 554, 625, -65, 9, "start"], ["Henzestraße", 408, 751, -21], ["Laubestraße", 548, 747, 21], ["Mansfelder Straße", 510, 767, 31],
  ["Bertolt-Brecht-Allee", 589, 757, -66, 8], ["Blumenst", 328, 251, -30, 9, "start"], ["Pfo", 350, 296, -15, 9, "start"],
  ["ferhannsstraße", 320, 332, 62, 9, "end"], ["JOHANNSTA", 318, 424, 3, 8, "start"], ["Thoma", 355, 538, -78, 9, "start"],
  ["ße", 634, 408, -9, 10, "end"],
];

const haloProps = { stroke: "#f3f1ec", strokeWidth: 2, paintOrder: "stroke", dominantBaseline: "central" as const };

const CityMap = () => (
  <MapSvg viewBox="290 168 734 628" preserveAspectRatio="xMinYMin slice" role="img" aria-label="Street map">
    <defs>
      <path id="kku" d="M961,266Q1011,286 1021,331" />
      <path id="weg" d="M829,343Q820,315 822,274" />
      <path id="mendel" d="M770,437Q795,454 844,456" />
      <path id="ring" d="M779,562A16,16 0 0 0 811,564A16,16 0 0 0 795,548" />
    </defs>
    <rect x="280" y="160" width="1200" height="1000" fill="#ebeae6" />
    <polygon points="620,226 700,215 691,377 620,377" fill="#f1e4dc" />
    <polygon points="620,377 663,373 664,398 620,408" fill="#f2f2f5" />
    <polygon points="758,733 887,743 910,748 1000,797 762,797" fill="#f2f2f5" />
    <polygon points="978,167 1026,203 1026,167" fill="#aac6f1" />
    {parks.map((p) => <polygon key={p} points={p} fill="#cfe2b8" />)}
    {paths.map((p) => <path key={p} d={p} fill="none" stroke="#b9cdb8" strokeWidth="1" />)}
    <path d={greys} fill="none" stroke="#cbcaca" strokeWidth="3.500" />
    <g fill="none" strokeLinecap="round" strokeLinejoin="round">
      <g stroke="#d6cfcd" strokeWidth="5">
        {minor.map((p) => <polyline key={p} points={p} />)}
        <rect x="810" y="430" width="14" height="37" rx="7" />
        <circle cx="795" cy="564" r="15" />
      </g>
      <g stroke="#f5f1ef" strokeWidth="2.800">
        {minor.map((p) => <polyline key={p} points={p} />)}
        <rect x="810" y="430" width="14" height="37" rx="7" />
        <circle cx="795" cy="564" r="15" />
      </g>
      <circle cx="795" cy="565" r="4" stroke="#d6cfcd" />
      {yellow.map((p) => <polyline key={p} points={p} stroke="#e2d199" strokeWidth="6.500" />)}
      {yellow.map((p) => <polyline key={p} points={p} stroke="#fff7d4" strokeWidth="4" />)}
      {primary.map((p) => <polyline key={p} points={p} stroke="#e6bd62" strokeWidth="8" />)}
      {primary.map((p) => <polyline key={p} points={p} stroke="#fdedb4" strokeWidth="5" />)}
    </g>
    <g fill="#3f3f3f" fontSize="9">
      {labels.map(([t, x, y, r, s = 9, a]) => (
        <text key={t + x} x={x} y={y} fontSize={s} textAnchor={a || "middle"} transform={`rotate(${r} ${x} ${y})`} {...haloProps}>{t}</text>
      ))}
      <text {...haloProps}><textPath href="#kku">Käthe-Kollwitz-Ufer</textPath></text>
      <text {...haloProps}><textPath href="#weg">Lothringer Weg</textPath></text>
      <text {...haloProps}><textPath href="#mendel">Mendelssohnallee</textPath></text>
      <text {...haloProps} fontSize="8"><textPath href="#ring">Barbarossaplatz</textPath></text>
    </g>
    <g fill="#5f7f62" textAnchor="middle" fontSize="10">
      <text x="894" y="333">Waldpark Blasewitz</text>
      <text x="798" y="696" fontSize="9">KGV</text>
      <text x="798" y="707" fontSize="9">Flora I</text>
      <text x="798" y="718" fontSize="9">e.V.</text>
    </g>
    <text x="677" y="304" textAnchor="end" fontSize="9" fill="#85736a">l Gustav Carus</text>
    <g fill="#555">
      <path d="M304,768l4,1.500v11l9,-4 -4,-2 -2,-4.500 7,3v5l-10,6 -4,-2z" />
      <text x="322" y="782" fontSize="14">bing</text>
    </g>
  </MapSvg>
);

/* ---------- page ---------- */

type Entry = [string, string | null, boolean?] | null;
const entries: Entry[] = [
  ["Quick view...", "mQuick", true], ["Show in Explorer", "mExplorer", true], ["Add Element to Clipboard", "mClip", true],
  ["Assign to a Project...", "mProject", true], ["Duct: Structure...", "mDuct", true], ["Print...", "mPrint", true], null,
  ["Read Coordinates of Selected Objects", "mXYGrey", true], ["Read All Coordinates", "mXY"], ["Set GIS-Length", "mGis", true], null,
  ["Data -> Object", "mData", true], ["Search: Start", "mStart", true], ["Search: Runs via", "mVia", true],
  ["Search: Excluded", "mExcl", true], ["Search: End", "mEnd", true], null,
  ["Area Statistics...", null], ["Adjust Selected Branch Ducts", null, true], ["BEP Reset", null], null,
];

const T = ({ n, menu, hot }: { n: string; menu?: boolean; hot?: boolean }) => (
  <Tool $menu={menu} $hot={hot} aria-label={n}><Icon n={n} />{menu && <Caret />}</Tool>
);

const ContextMenu = () => (
  <Menu role="menu">
    {entries.map((e, i) => (e
      ? <MenuRow key={e[0]} disabled={e[2]} role="menuitem"><IconSlot>{e[1] && <Icon n={e[1]} />}</IconSlot><MenuText>{e[0]}</MenuText></MenuRow>
      : <Rule key={i} />))}
    <SubAnchor>
      <MenuRow $hot role="menuitem">
        <IconSlot><Icon n="case" /></IconSlot><MenuText>Report Pack</MenuText>
        <svg width="4" height="7" viewBox="0 0 4 7"><path d="M0 0v7l4-3.500z" /></svg>
      </MenuRow>
      <Menu $sub role="menu">
        {["Implementation documents...", "Report Pack1...", "Splice Pack EUN..."].map((t, i) => (
          <MenuRow key={t} $hot={i === 0} role="menuitem"><IconSlot><Icon n="case" /></IconSlot><MenuText>{t}</MenuText></MenuRow>
        ))}
      </Menu>
    </SubAnchor>
  </Menu>
);

export default function App() {
  return (
    <Window>
      <GlobalStyle />
      <TitleBar>
        <Icon n="brand" />
        <Title>ConnectMaster 6.76 SP7</Title>
        <CaptionButton aria-label="Minimize"><svg width="8" height="8"><path d="M0 5h8" stroke="#5a626e" strokeWidth="2" /></svg></CaptionButton>
        <CaptionButton aria-label="Maximize"><svg width="10" height="8"><rect x="0.500" y="0.500" width="9" height="6" fill="#cfd6e0" stroke="#6f7f96" /><path d="M0 1h10" stroke="#6f7f96" strokeWidth="2" /></svg></CaptionButton>
        <CaptionButton aria-label="Close"><svg width="9" height="8"><path d="M1 0l7 8M8 0L1 8" stroke="#66758c" strokeWidth="2" /></svg></CaptionButton>
      </TitleBar>
      <MenuBar>
        {["File", "Network Inventory", "Network Usage", "Network Analyze/Search", "Network Operation", "Network View", "Contacts", "Help", "Test"].map((t) => (
          <button key={t}>{t}</button>
        ))}
        <MenuTail><Caret c="#5c5c70" /></MenuTail>
      </MenuBar>

      <Body>
        <LeftColumn>
          <Group $grow>
            <Tabs>
              <Tab $on aria-label="Tree"><Icon n="tree" /></Tab>
              <Tab aria-label="Toolbox"><Icon n="toolbox" /></Tab>
              <Tab aria-label="Projects"><Icon n="project" /></Tab>
              <Tab aria-label="Connections"><Icon n="plug" /></Tab>
            </Tabs>
            <Box>
              <SideBar>
                <SideButton aria-label="New node"><Icon n="treeNew" /></SideButton>
                <SideButton aria-label="Sum"><Icon n="sigma" /></SideButton>
                <SideButton aria-label="Refresh"><Icon n="refresh" /></SideButton>
                <Push />
                <SideButton $hot aria-label="Quick"><Icon n="bolt" /></SideButton>
                <SideButton aria-label="More"><Icon n="more" /></SideButton>
              </SideBar>
              <SelectBox $side>
                <select aria-label="Region" defaultValue="uk"><option value="uk">United Kingdom</option></select>
                <Caret c="#777" />
              </SelectBox>
              <TreeRow>
                <Expander aria-label="Expand"><svg width="7" height="7"><path d="M0 3.500h7M3.500 0v7" stroke="#223a66" /></svg></Expander>
                <Icon n="home" />
                <TreeLabel>United Kingdom</TreeLabel>
              </TreeRow>
            </Box>
          </Group>
          <Grip />
          <Group>
            <Tabs>
              <Tab aria-label="Clipboard"><Icon n="clipboard" /></Tab>
              <Tab $on aria-label="Table"><Icon n="table" /></Tab>
              <Tab aria-label="Find"><Icon n="bino" /></Tab>
              <Tab aria-label="Info"><Icon n="info" /></Tab>
              <Tab aria-label="Checks"><Icon n="check" /></Tab>
              <PlainButton aria-label="Collapse"><Icon n="collapse" /></PlainButton>
            </Tabs>
            <Box>
              <SideBar $deep>
                <SideButton aria-label="Import"><Icon n="tabDown" /></SideButton>
                <SideButton aria-label="Export"><Icon n="tabUp" /></SideButton>
                <Sep />
                <SideButton aria-label="Up"><Icon n="up" /></SideButton>
                <SideButton aria-label="Down"><Icon n="down" /></SideButton>
                <SideButton aria-label="Cycle"><Icon n="cycle" /></SideButton>
                <Push />
                <SideButton aria-label="Delete"><Icon n="del" /></SideButton>
              </SideBar>
            </Box>
          </Group>
        </LeftColumn>
        <Splitter><Grip $v /></Splitter>

        <Main>
          <AddressBar>
            <T n="window" hot />
            <T n="back" />
            <T n="fwd" />
            <Tool $slim aria-label="History"><Caret /></Tool>
            <SelectBox $grow>
              <Icon n="geo" />
              <select aria-label="View" defaultValue="geo"><option value="geo">GEO</option></select>
              <Caret c="#777" />
            </SelectBox>
            <SearchInput aria-label="Search Objects" placeholder="Search Objects..." />
            <T n="bino" menu />
            <Spacer $w={4} />
          </AddressBar>
          <DocTabs>
            <DocTab>GEO
              <button aria-label="Close GEO"><svg width="9" height="9"><path d="M1 1l7 7M8 1L1 8" stroke="#8c8c90" strokeWidth="2" /></svg></button>
            </DocTab>
          </DocTabs>
          <Doc>
            <ToolRow>
              <T n="globe" menu /><T n="page" /><T n="layout" hot /><Sep />
              <T n="zoomIn" /><T n="zoomOut" /><T n="hand" hot /><T n="cursor" /><T n="infoDark" />
              <T n="selRect" /><T n="selPoly" /><T n="selCircle" /><Sep />
              <T n="pinGrey" /><T n="lineGrey" />
              <Tool $text>Address at Coordinate</Tool>
              <T n="shape" /><T n="shapeFill" /><T n="letter" /><Sep />
              <T n="addPoint" /><T n="digitize" menu /><T n="snap" menu /><T n="pinBlue" menu />
            </ToolRow>
            <ToolRow $deep>
              <T n="bino" menu /><T n="handLayer" menu /><T n="handLine" menu />
              <Anchor>
                <Tool $menu $open aria-label="Object functions"><Icon n="handObj" /><Caret /></Tool>
                <ContextMenu />
              </Anchor>
              <Push />
              <button aria-label="Close toolbar"><svg width="9" height="8"><path d="M1 0l7 8M8 0L1 8" stroke="#000" strokeWidth="1.500" /></svg></button>
            </ToolRow>
            <Work>
              <Rail>
                <RailTab aria-label="Globe"><Icon n="globe" /></RailTab>
                <RailTab aria-label="Information"><Icon n="infoDark" /></RailTab>
                <RailTab aria-label="Legend"><Icon n="list" /></RailTab>
                <RailTab $on aria-label="Layers"><Icon n="layers" /></RailTab>
                <RailCells>
                  <RailCell aria-label="Row 1" />
                  <RailCell aria-label="Row 2"><svg width="6" height="9"><path d="M1 1l4 3.500L1 8" fill="none" stroke="#44507a" strokeWidth="1.500" /></svg></RailCell>
                  <RailCell aria-label="Row 3" />
                  <RailCell aria-label="Row 4" />
                </RailCells>
                <RailRow $h={20}>
                  <svg width="5" height="9"><path d="M5 0v9L0 4.500z" fill="#3f5078" /></svg>
                  <svg width="5" height="9"><path d="M0 0v9l5-4.500z" fill="#3f5078" /></svg>
                </RailRow>
                <RailRow $h={25} $icon><Icon n="measure" /></RailRow>
                <RailRow $h={25} $icon><Icon n="printer" /></RailRow>
                <Grip />
                <RailGrid />
                <RailRest />
              </Rail>
              <RailGap><Grip $v /></RailGap>
              <MapFrame><CityMap /></MapFrame>
            </Work>
            <StatusRow>
              <StatusItem $w={29}><Icon n="pencil" />-</StatusItem>
              <Sep /><Spacer $w={24} /><Sep />
              <Spacer $w={3} />
              <StatusItem $tight $w={41}><Icon n="starLayer" />0<Caret /></StatusItem>
              <StatusItem $tight $w={41}><Icon n="snap" />0<Caret /></StatusItem>
              <Sep />
              <StatusItem $tight><Icon n="ruler" />Zoom 1,5846 miles, 1 cm = 0,1274 miles</StatusItem>
              <Spacer $w={8} /><Sep /><Spacer $w={2} />
              <SelectBox><select aria-label="Scale"><option>{"\u00a0"}</option></select><Caret c="#777" /></SelectBox>
              <Spacer $w={8} />
              <StatusItem $tight><Icon n="xy" />1532703,6 / 6632047,7</StatusItem>
            </StatusRow>
          </Doc>
        </Main>
      </Body>

      <StatusRow $outer>
        <StatusItem><Icon n="brand" />6.76 SP7</StatusItem>
        <StatusItem><Icon n="db" />cmdb01 (Oracle)</StatusItem>
        <StatusItem><Icon n="user" />karlg</StatusItem>
        <Push />
        <Sep />
        <Tool $text>Protocol</Tool>
        <Caret />
        <Spacer $w={8} />
        <Icon n="book" />
        <Spacer $w={3} />
        <T n="bolt" menu />
        <T n="pens" />
        <Spacer $w={4} />
        <svg width="12" height="12"><path d="M9 1h2v2H9zM5 5h2v2H5zM9 5h2v2H9zM1 9h2v2H1zM5 9h2v2H5zM9 9h2v2H9z" fill="#8b8c96" /></svg>
      </StatusRow>
    </Window>
  );
}
